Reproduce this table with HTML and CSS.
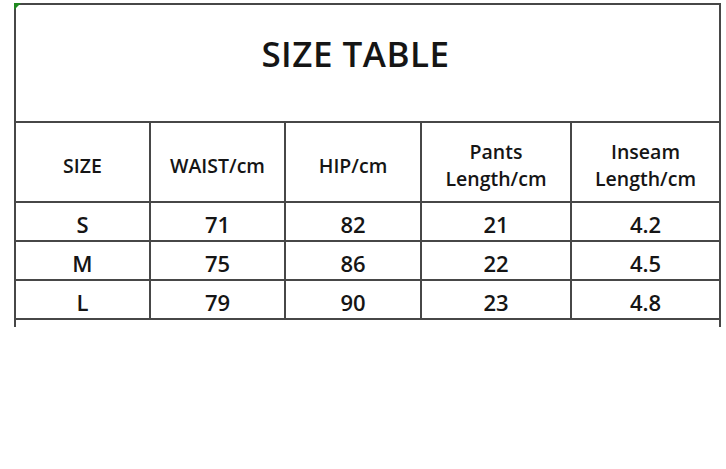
FILE: index.html
```html
<!DOCTYPE html>
<html lang="en">
<head>
<meta charset="utf-8">
<title>Size Table</title>
<link rel="stylesheet" href="styles.css">
</head>
<body>
<div class="page">
  <div class="sheet">
    <span class="marker"></span>
    <div class="grid">
      <div class="cell title">SIZE TABLE</div>

      <div class="cell head">SIZE</div>
      <div class="cell head">WAIST/cm</div>
      <div class="cell head">HIP/cm</div>
      <div class="cell head">Pants<br>Length/cm</div>
      <div class="cell head">Inseam<br>Length/cm</div>

      <div class="cell data">S</div>
      <div class="cell data">71</div>
      <div class="cell data">82</div>
      <div class="cell data">21</div>
      <div class="cell data">4.2</div>

      <div class="cell data">M</div>
      <div class="cell data">75</div>
      <div class="cell data">86</div>
      <div class="cell data">22</div>
      <div class="cell data">4.5</div>

      <div class="cell data">L</div>
      <div class="cell data">79</div>
      <div class="cell data">90</div>
      <div class="cell data">23</div>
      <div class="cell data">4.8</div>
    </div>
    <div class="tail"></div>
  </div>
</div>
</body>
</html>
```

FILE: styles.css
```css
* { box-sizing: border-box; }

html, body {
  margin: 0;
  padding: 0;
  background: #ffffff;
}

.page {
  width: 726px;
  height: 469px;
  padding: 3px 0 0 14px;
  font-family: "Open Sans", "Noto Sans", sans-serif;
  color: #151515;
}

.sheet {
  position: relative;
  width: 707px;
}

.marker {
  position: absolute;
  left: 0;
  top: 0;
  width: 0;
  height: 0;
  border-top: 7px solid #1f8a1f;
  border-right: 7px solid transparent;
}

.grid {
  display: grid;
  grid-template-columns: 135px 135px 136px 150px 149px;
  grid-template-rows: 118px 80px 39px 39px 39px;
  border-top: 2px solid #474747;
  border-left: 2px solid #474747;
  width: 707px;
}

.cell {
  border-right: 2px solid #474747;
  border-bottom: 2px solid #474747;
  display: flex;
  align-items: center;
  justify-content: center;
  text-align: center;
}

.title {
  grid-column: 1 / span 5;
  font-size: 35px;
  font-weight: 600;
  padding-bottom: 19px;
  padding-right: 24px;
  letter-spacing: 0.5px;
}

.head {
  font-size: 19.5px;
  font-weight: 600;
  line-height: 27px;
  padding-top: 6px;
}

.data {
  font-size: 22px;
  font-weight: 600;
  padding-top: 4px;
}

.tail {
  height: 7px;
  width: 707px;
  border-left: 2px solid #474747;
  border-right: 2px solid #474747;
}
```
